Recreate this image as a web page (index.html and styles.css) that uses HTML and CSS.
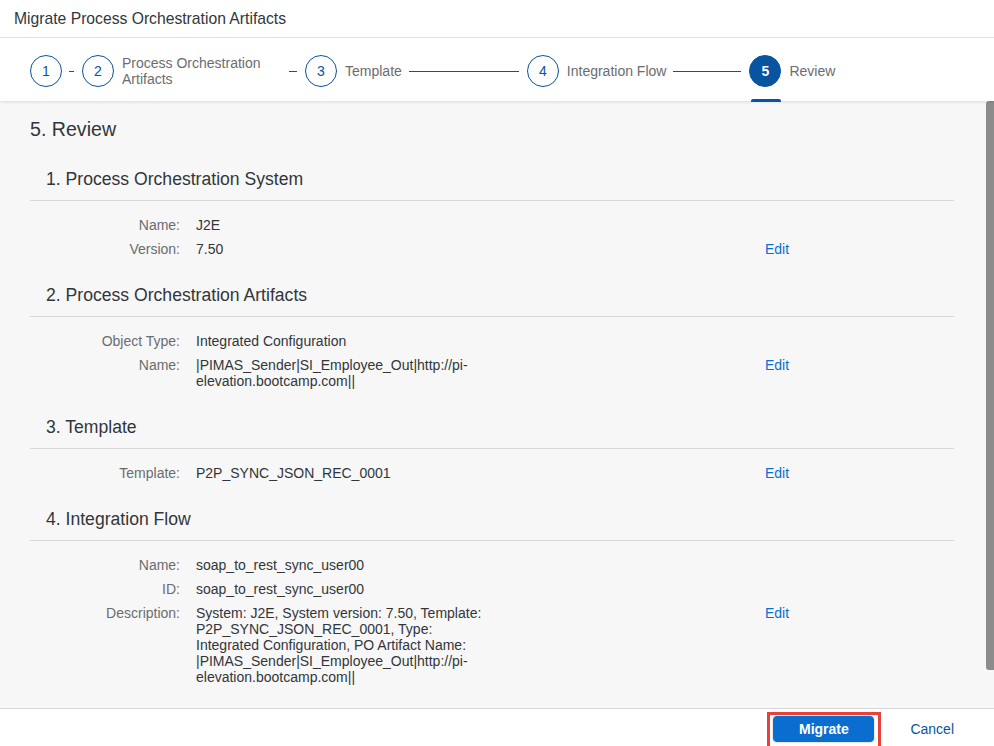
FILE: index.html
```html
<!DOCTYPE html>
<html lang="en">
<head>
<meta charset="utf-8">
<title>Migrate Process Orchestration Artifacts</title>
<link rel="stylesheet" href="styles.css">
</head>
<body>
<div class="dialog">
  <header class="dlg-header">Migrate Process Orchestration Artifacts</header>

  <nav class="wizard">
    <div class="wizard-row">
      <div class="step"><span class="circle">1</span></div>
      <span class="sep sep1"></span>
      <div class="step"><span class="circle">2</span><span class="step-label label2">Process Orchestration Artifacts</span></div>
      <span class="sep sep2"></span>
      <div class="step"><span class="circle">3</span><span class="step-label">Template</span></div>
      <span class="sep sep3"></span>
      <div class="step"><span class="circle">4</span><span class="step-label">Integration Flow</span></div>
      <span class="sep sep4"></span>
      <div class="step"><span class="circle current">5</span><span class="step-label">Review</span></div>
    </div>
  </nav>

  <div class="content">
    <main class="scroll-body">
      <h1 class="review-title">5. Review</h1>

      <section class="section">
        <h2 class="section-title">1. Process Orchestration System</h2>
        <div class="form">
          <span class="lbl">Name:</span><span class="val">J2E</span><span class="act"></span>
          <span class="lbl">Version:</span><span class="val">7.50</span><span class="act"><a class="edit" href="#">Edit</a></span>
        </div>
      </section>

      <section class="section">
        <h2 class="section-title">2. Process Orchestration Artifacts</h2>
        <div class="form">
          <span class="lbl">Object Type:</span><span class="val">Integrated Configuration</span><span class="act"></span>
          <span class="lbl">Name:</span><span class="val">|PIMAS_Sender|SI_Employee_Out|http://pi-elevation.bootcamp.com||</span><span class="act"><a class="edit" href="#">Edit</a></span>
        </div>
      </section>

      <section class="section">
        <h2 class="section-title">3. Template</h2>
        <div class="form">
          <span class="lbl">Template:</span><span class="val">P2P_SYNC_JSON_REC_0001</span><span class="act"><a class="edit" href="#">Edit</a></span>
        </div>
      </section>

      <section class="section">
        <h2 class="section-title">4. Integration Flow</h2>
        <div class="form">
          <span class="lbl">Name:</span><span class="val">soap_to_rest_sync_user00</span><span class="act"></span>
          <span class="lbl">ID:</span><span class="val">soap_to_rest_sync_user00</span><span class="act"></span>
          <span class="lbl">Description:</span><span class="val">System: J2E, System version: 7.50, Template: P2P_SYNC_JSON_REC_0001, Type: Integrated Configuration, PO Artifact Name: |PIMAS_Sender|SI_Employee_Out|http://pi-elevation.bootcamp.com||</span><span class="act"><a class="edit" href="#">Edit</a></span>
        </div>
      </section>
    </main>
    <div class="scrollbar"><div class="thumb"></div></div>
  </div>

  <footer class="dlg-footer">
    <span class="highlight"><button class="btn-primary">Migrate</button></span>
    <button class="btn-ghost">Cancel</button>
  </footer>
</div>
</body>
</html>
```

FILE: styles.css
```css
* { box-sizing: border-box; }

html, body {
  margin: 0;
  padding: 0;
  background: #ffffff;
}

body {
  font-family: "Liberation Sans", Arial, sans-serif;
  font-size: 14px;
  color: #32363a;
}

.dialog {
  width: 994px;
  height: 746px;
  display: flex;
  flex-direction: column;
  overflow: hidden;
}

.dlg-header {
  height: 38px;
  flex: none;
  padding: 0 14px;
  display: flex;
  align-items: center;
  font-size: 15.7px;
  color: #32363a;
  border-bottom: 1px solid #e5e5e5;
  background: #fff;
}

/* Wizard progress */
.wizard {
  height: 63px;
  flex: none;
  padding: 17px 0 0 30px;
  background: #fff;
  box-shadow: 0 1px 3px rgba(0, 0, 0, 0.12);
  position: relative;
  z-index: 2;
}

.wizard-row {
  display: flex;
  align-items: center;
  height: 32px;
}

.step {
  display: flex;
  align-items: center;
  height: 32px;
}

.circle {
  width: 32px;
  height: 32px;
  border-radius: 50%;
  border: 1px solid #0854a0;
  color: #0854a0;
  display: flex;
  align-items: center;
  justify-content: center;
  font-size: 14px;
  flex: none;
  position: relative;
  background: #fff;
}

.circle.current {
  background: #0854a0;
  color: #fff;
  font-weight: bold;
}

.circle.current::after {
  content: "";
  position: absolute;
  left: 1px;
  top: 43px;
  width: 30px;
  height: 3px;
  background: #0854a0;
  border-radius: 2px 2px 0 0;
}

.step-label {
  margin-left: 8px;
  color: #6a6d70;
  font-size: 14px;
  line-height: 16px;
  white-space: nowrap;
}

.step-label.label2 {
  white-space: normal;
  width: 140px;
  margin-top: -1px;
}

.sep {
  height: 1px;
  background: #0854a0;
  flex: none;
}
.sep1 { width: 5px; margin-left: 7px; margin-right: 8px; }
.sep2 { width: 8px; margin-left: 27px; margin-right: 8px; }
.sep3 { width: 110px; margin-left: 7px; margin-right: 8px; }
.sep4 { width: 68px; margin-left: 7px; margin-right: 8px; }

/* Content */
.content {
  flex: 1;
  min-height: 0;
  display: flex;
  background: #f7f7f7;
  overflow: hidden;
}

.scroll-body {
  flex: 1;
  padding: 16px 32px 0 30px;
  overflow: hidden;
}

.review-title {
  margin: 0;
  font-size: 19.6px;
  line-height: 24px;
  font-weight: normal;
  color: #32363a;
}

.section {
  padding-bottom: 14px;
}

.review-title + .section {
  margin-top: 18px;
}

.section-title {
  margin: 0;
  height: 42px;
  display: flex;
  align-items: center;
  padding-left: 16px;
  font-size: 17.6px;
  font-weight: normal;
  color: #32363a;
  border-bottom: 1px solid #d9d9d9;
}

.form {
  display: grid;
  grid-template-columns: 150px 294px 1fr;
  column-gap: 16px;
  padding-top: 12px;
  line-height: 16px;
}

.form > span {
  padding: 4px 0;
}

.lbl {
  text-align: right;
  color: #6a6d70;
}

.val {
  color: #32363a;
  overflow-wrap: break-word;
}

.act {
  padding-left: 259px !important;
}

.edit {
  color: #0a6ed1;
  text-decoration: none;
}

.scrollbar {
  width: 8px;
  flex: none;
}

.thumb {
  height: 569px;
  background: #8c8c8c;
  border-radius: 3px 0 0 3px;
}

/* Footer */
.dlg-footer {
  height: 38px;
  flex: none;
  display: flex;
  align-items: center;
  justify-content: flex-end;
  padding: 0 32px 0 0;
  border-top: 1px solid #d9d9d9;
  background: #fff;
  gap: 28px;
}

.highlight {
  position: relative;
  display: inline-flex;
  margin-top: 3px;
}

.highlight::after {
  content: "";
  position: absolute;
  left: -6px;
  right: -7px;
  top: -4px;
  bottom: -8px;
  border: 3px solid #e8413c;
  pointer-events: none;
}

.btn-primary {
  width: 101px;
  height: 26px;
  border: 1px solid #0a6ed1;
  border-radius: 4px;
  background: #0a6ed1;
  color: #fff;
  font-family: "Liberation Sans", Arial, sans-serif;
  font-size: 14px;
  font-weight: bold;
  padding: 0;
  box-shadow: 0 0 2px rgba(0, 0, 0, 0.35);
}

.btn-ghost {
  height: 26px;
  margin-top: 2px;
  padding: 0 8px;
  border: none;
  background: transparent;
  color: #0854a0;
  font-family: "Liberation Sans", Arial, sans-serif;
  font-size: 14px;
}
```
